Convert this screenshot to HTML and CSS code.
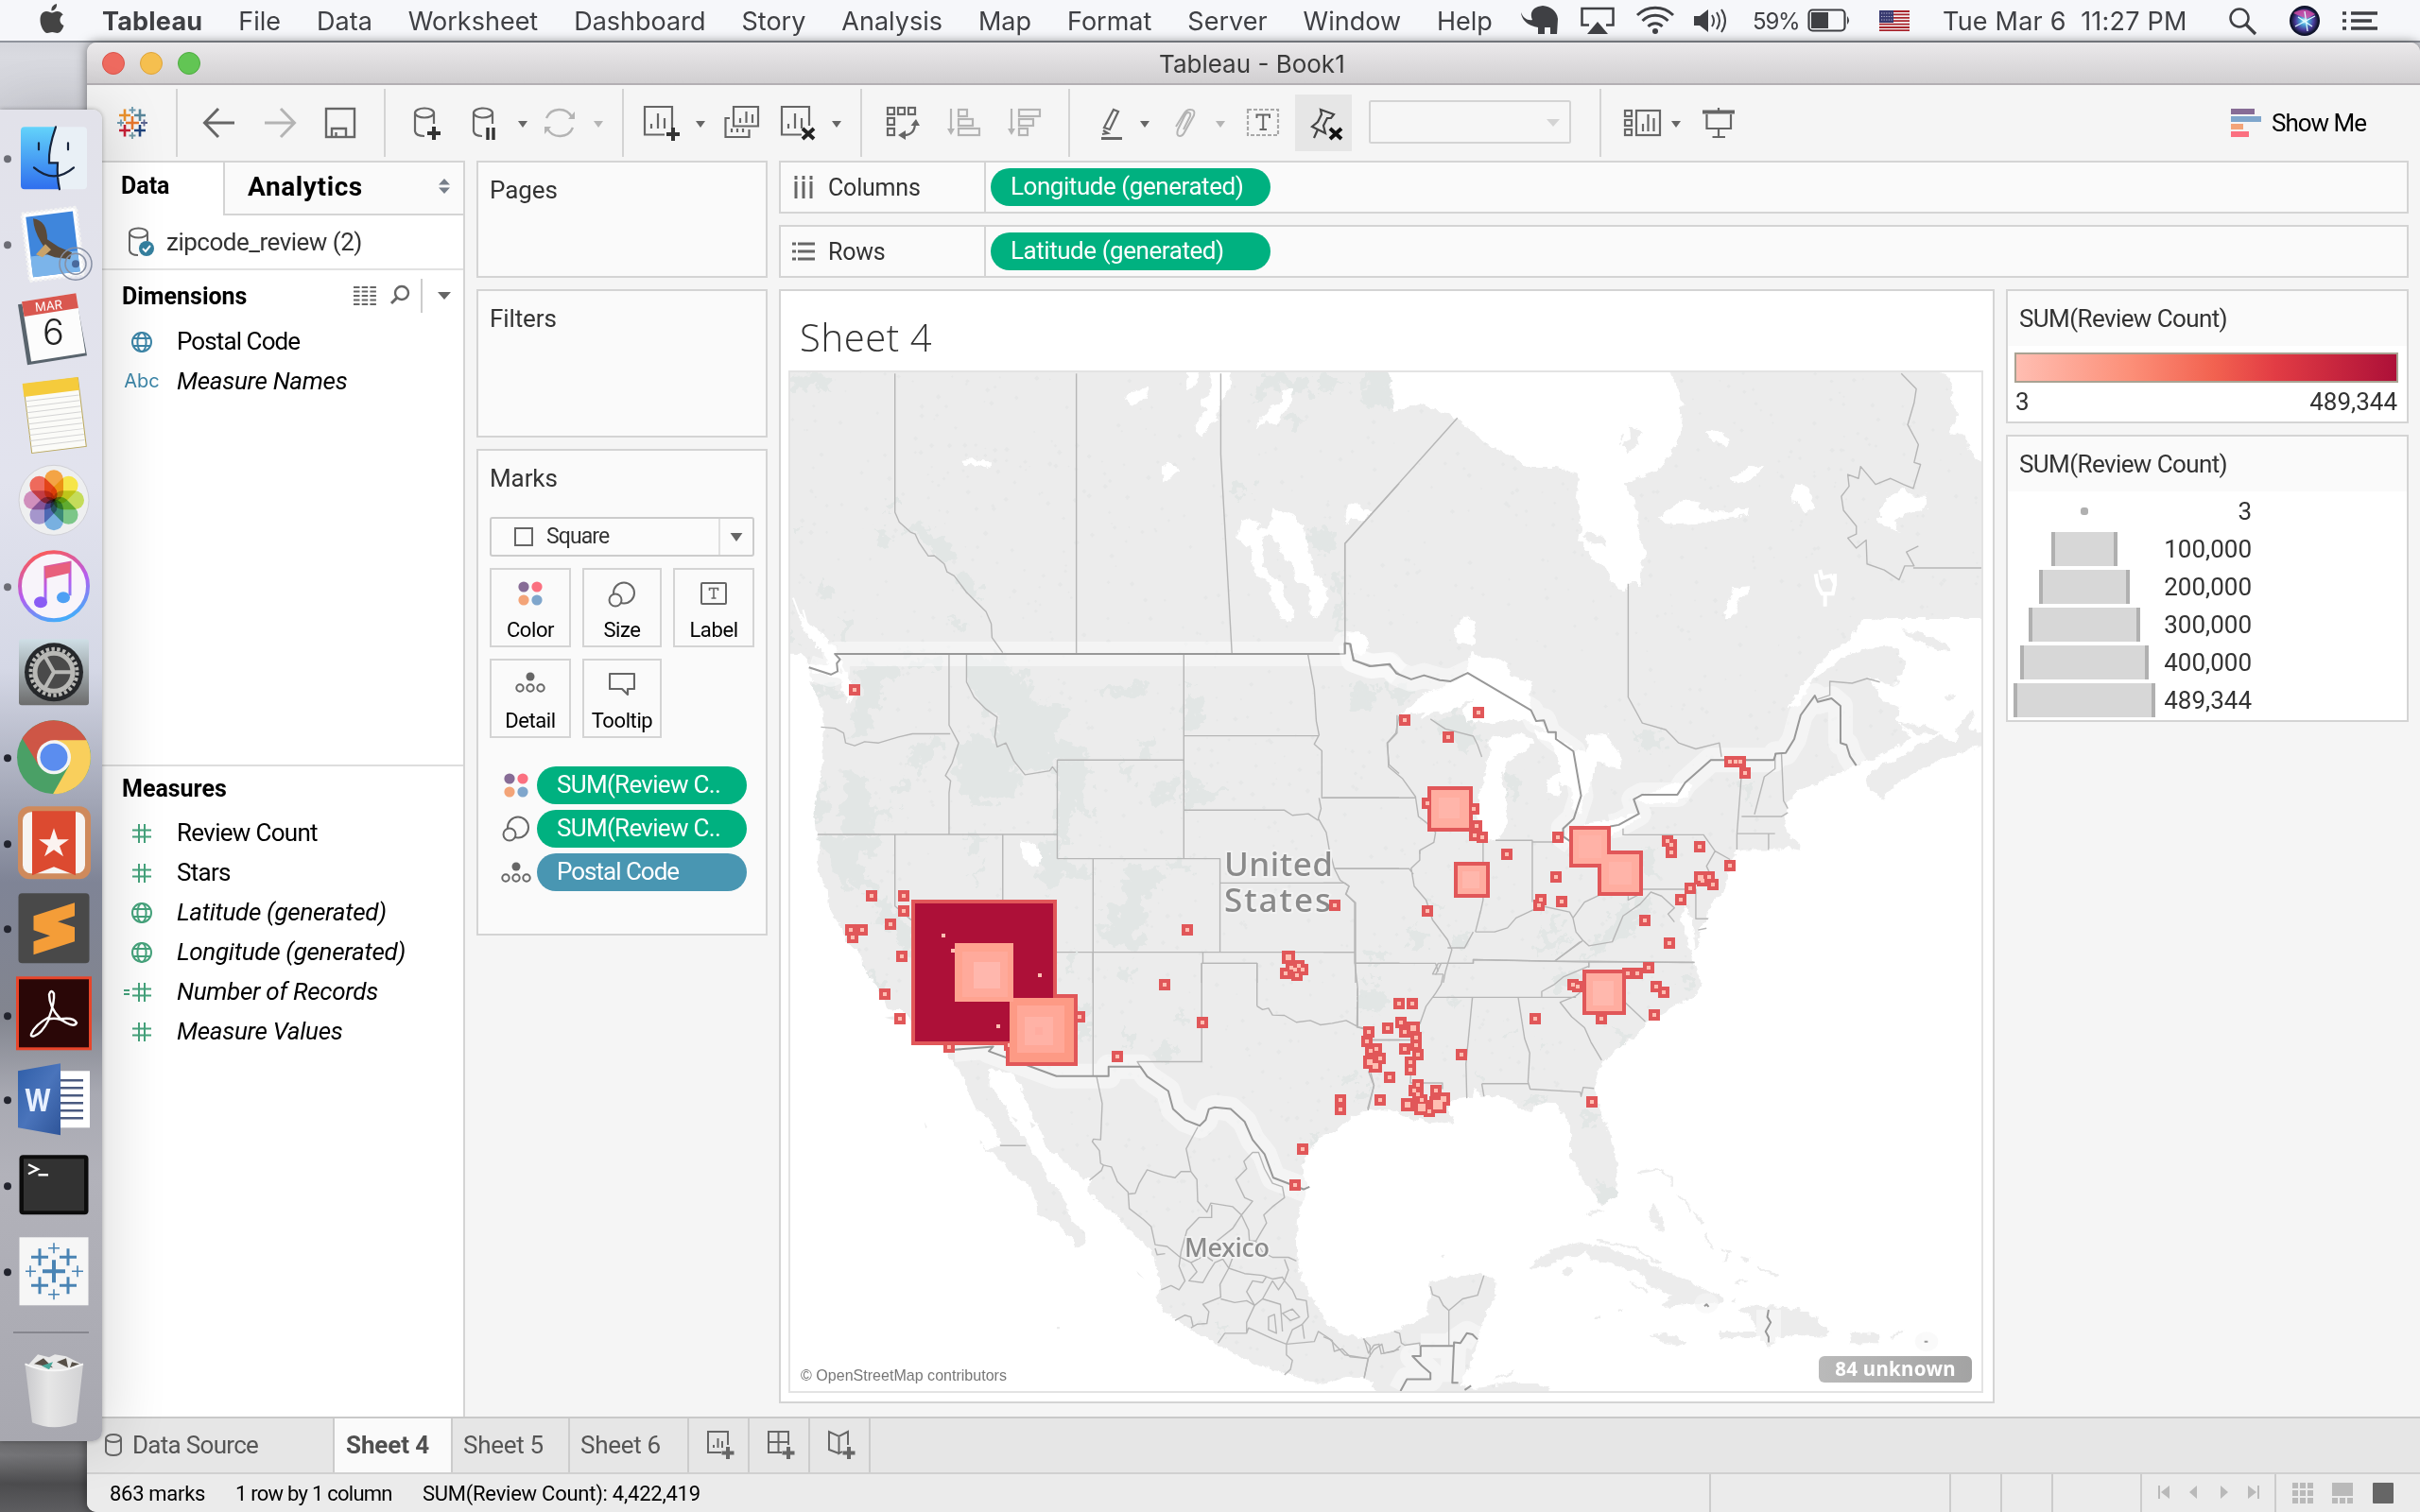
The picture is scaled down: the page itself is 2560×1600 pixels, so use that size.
FILE: index.html
```html
<!DOCTYPE html>
<html lang="en">
<head>
<meta charset="utf-8">
<title>Tableau - Book1</title>
<link rel="stylesheet" href="styles.css">
</head>
<body>
<svg class="defs" width="0" height="0" aria-hidden="true">
  <defs>
    <symbol id="caret" viewBox="0 0 10 7"><path d="M0 0H10L5 7Z"/></symbol>
    <symbol id="globe" viewBox="0 0 24 24"><g fill="none" stroke="currentColor" stroke-width="2"><circle cx="12" cy="12" r="10"/><ellipse cx="12" cy="12" rx="4.6" ry="10"/><path d="M3 8H21M3 16H21"/></g></symbol>
    <symbol id="hash" viewBox="0 0 22 22"><path d="M8 1V21M14 1V21M1 7.500H21M1 14.500H21" fill="none" stroke="currentColor" stroke-width="2"/></symbol>
    <symbol id="dots4" viewBox="0 0 26 26"><circle cx="6" cy="6" r="5.600" fill="#876c96"/><circle cx="20" cy="6" r="5.600" fill="#fb7080"/><circle cx="6" cy="20" r="5.600" fill="#f3a478"/><circle cx="20" cy="20" r="5.600" fill="#7fa6cc"/></symbol>
    <symbol id="sizes" viewBox="0 0 30 28"><g fill="#fafafa" stroke="#666" stroke-width="2"><circle cx="17" cy="12.500" r="11"/><circle cx="8" cy="20" r="6.500"/></g></symbol>
    <symbol id="detail" viewBox="0 0 32 22"><circle cx="16" cy="5" r="4.500" fill="#666"/><g fill="none" stroke="#666" stroke-width="2"><circle cx="5" cy="17" r="3.700"/><circle cx="16" cy="17" r="3.700"/><circle cx="27" cy="17" r="3.700"/></g></symbol>
    <linearGradient id="finder" x1="0" y1="0" x2="0" y2="1"><stop offset="0" stop-color="#63d3fa"/><stop offset="1" stop-color="#2f6fee"/></linearGradient>
    <linearGradient id="itunes" gradientUnits="userSpaceOnUse" x1="45" y1="-36" x2="70" y2="36"><stop offset="0" stop-color="#fa5a5a"/><stop offset=".5" stop-color="#b65cf0"/><stop offset="1" stop-color="#3fb0fa"/></linearGradient>
    <linearGradient id="prefs" x1="0" y1="0" x2="0" y2="1"><stop offset="0" stop-color="#cfdfe6"/><stop offset="1" stop-color="#6c6c6c"/></linearGradient>
    <radialGradient id="siri"><stop offset="0" stop-color="#e8ffff"/><stop offset=".3" stop-color="#48a8d8"/><stop offset=".7" stop-color="#4a3a9a"/><stop offset="1" stop-color="#161a38"/></radialGradient>
    <linearGradient id="word" x1="0" y1="0" x2="1" y2="1"><stop offset="0" stop-color="#2f5ea8"/><stop offset=".5" stop-color="#4a74bb"/><stop offset="1" stop-color="#2f5599"/></linearGradient>
    <linearGradient id="bin" x1="0" y1="0" x2="1" y2="0"><stop offset="0" stop-color="#c9c9cc"/><stop offset=".4" stop-color="#e6e6e6"/><stop offset="1" stop-color="#d2d2d4"/></linearGradient>
    <filter id="shore" color-interpolation-filters="sRGB"><feTurbulence type="fractalNoise" baseFrequency=".05" numOctaves="3" seed="4"/><feDisplacementMap in="SourceGraphic" scale="20" xChannelSelector="R" yChannelSelector="G"/></filter>
    <filter id="ragged" color-interpolation-filters="sRGB"><feTurbulence type="fractalNoise" baseFrequency=".035" numOctaves="3" seed="9"/><feDisplacementMap in="SourceGraphic" scale="70" xChannelSelector="R" yChannelSelector="G"/></filter>
  </defs>
</svg>

<header class="menubar">
  <svg class="apple" viewBox="0 0 28 34"><path d="M19 1C15 2 13 5 13.500 8.500C17 8 19.500 5 19 1ZM14 10.500C12 10.500 11 9 8 9C4 9 1.500 12.500 1.500 18C1.500 24.500 5.500 32 9 32C11 32 12 31 14.200 31C16.500 31 17.500 32 19.500 32C23 32 25.500 27.500 26.500 24C21 21.500 21.500 15 25.700 12.500C24 10 21.500 9 19.500 9C17 9 15.800 10.500 14 10.500Z" fill="#444"/></svg>
  <nav class="menus">
    <b>Tableau</b><span>File</span><span>Data</span><span>Worksheet</span><span>Dashboard</span><span>Story</span><span>Analysis</span><span>Map</span><span>Format</span><span>Server</span><span>Window</span><span>Help</span>
  </nav>
  <svg class="tray" width="240" height="44" viewBox="1600 0 240 44">
    <path d="M1609 13C1611 19 1616 22 1621 21C1618 14 1621 9 1627 7L1632 6C1640 7 1647 11 1648 20L1647 36H1640V29H1634V36H1627V29C1622 28 1610 25 1609 13Z" fill="#3f4044"/>
    <path d="M1681 26.500H1673.500V9H1706.500V26.500H1699" fill="none" stroke="#3f4044" stroke-width="2.500"/><path d="M1690 23L1701 36H1679Z" fill="#3f4044"/>
    <g fill="none" stroke="#3f4044" stroke-width="3"><path d="M1732 16A27 27 0 0 1 1770 16M1737.500 22A19 19 0 0 1 1764.500 22M1743.500 28A10.500 10.500 0 0 1 1758.500 28"/></g><circle cx="1751" cy="33" r="3" fill="#3f4044"/>
    <path d="M1792 17H1798L1807 10V34L1798 27H1792Z" fill="#3f4044"/><g fill="none" stroke="#3f4044" stroke-width="2"><path d="M1811 16Q1815 22 1811 28M1816 13Q1822 22 1816 31M1821 10Q1829 22 1821 34"/></g>
  </svg>
  <span class="pct">59%</span>
  <svg class="battery" width="46" height="26" viewBox="0 0 46 26"><rect x="1.500" y="1.500" width="38" height="22" rx="4" fill="none" stroke="#3f4044" stroke-width="2.200"/><rect x="4" y="4" width="18" height="17" fill="#3f4044"/><path d="M42 8Q46 12.500 42 17Z" fill="#3f4044"/></svg>
  <svg class="flag" width="32" height="22" viewBox="0 0 32 22"><path d="M0 0H32V22H0Z" fill="#f4f1f1"/><path d="M0 1H32M0 4.400H32M0 7.800H32M0 11.200H32M0 14.600H32M0 18H32M0 21.200H32" stroke="#a8242c" stroke-width="1.800"/><path d="M0 0H15V13H0Z" fill="#383a70"/><path d="M2 3H14M2 6.500H14M2 10H14" stroke="#b9bbd4" stroke-width="1.200" stroke-dasharray="1.200 1.400"/></svg>
  <span class="clock">Tue Mar 6&nbsp; 11:27 PM</span>
  <svg class="tray2" width="170" height="44" viewBox="2350 0 170 44">
    <circle cx="2369" cy="19" r="9.500" fill="none" stroke="#3f4044" stroke-width="2.500"/><path d="M2376 26L2386 36" stroke="#3f4044" stroke-width="3.200"/>
    <circle cx="2438" cy="22" r="16" fill="#10142c"/><circle cx="2438" cy="22" r="14" fill="url(#siri)"/><path d="M2426 14Q2438 6 2449 15L2440 20Z" fill="#d94fa8" opacity=".8"/><path d="M2428 28L2449 17M2438 12L2441 33M2431 18L2446 28" stroke="#dffcff" stroke-width="1.300"/>
    <path d="M2487 14H2515M2487 22H2509M2487 30H2515" stroke="#3f4044" stroke-width="3.400"/><path d="M2478 14H2482M2478 22H2482M2478 30H2482" stroke="#3f4044" stroke-width="3.400"/>
  </svg>
</header>

<main class="window">
  <div class="titlebar"><i class="light close"></i><i class="light min"></i><i class="light max"></i><span class="title">Tableau - Book1</span></div>

  <div class="toolbar">
    <svg class="tg" width="96" height="72" viewBox="92 94 96 72"><g fill="none" stroke-width="2.600"><path d="M140 123V137M133 130H147" stroke="#e8762c"/><path d="M132 115.500V128M126 122H138" stroke="#eb912c"/><path d="M148 115.500V128M142 122H154" stroke="#59879b"/><path d="M132 132V144.500M126 138H138" stroke="#c72035"/><path d="M148 132V144.500M142 138H154" stroke="#1f447e"/></g><g fill="none" stroke-width="1.800"><path d="M140 113V120M136.500 116.500H143.500M128 126.500V133.500M124 130H131" stroke="#6f9bb0"/><path d="M152.500 126.500V133.500M149 130H156" stroke="#5c6692"/><path d="M140 140V147M136.500 143.500H143.500" stroke="#7199a6"/></g></svg>
    <svg class="tg" width="220" height="72" viewBox="188 94 220 72"><path d="M248 130H217M231 115L216.500 130L231 145" fill="none" stroke="#666" stroke-width="3"/><path d="M280 130H311M297 115L311.500 130L297 145" fill="none" stroke="#b4b4b4" stroke-width="3"/><g fill="none" stroke="#666" stroke-width="2.400"><rect x="345" y="115" width="30" height="30"/><path d="M351 145V136H366V145M355.500 145V140"/></g></svg>
    <svg class="tg" width="252" height="72" viewBox="408 94 252 72"><g fill="none" stroke="#666" stroke-width="2.200"><ellipse cx="449" cy="119.500" rx="10" ry="5"/><path d="M439 119.500V139Q440 144 449 144M459 119.500V131"/><ellipse cx="511" cy="119.500" rx="10" ry="5"/><path d="M501 119.500V139Q502 144 510 144M521 119.500V131"/></g><path d="M459 134V148M452 141H466" stroke="#333" stroke-width="4"/><path d="M516 135V148M522 135V148" stroke="#333" stroke-width="3.400"/><path d="M548 128H558L553 135Z" fill="#666"/><g fill="none" stroke="#b4b4b4" stroke-width="2.400"><path d="M578 125A15 15 0 0 1 605 124M606 135A15 15 0 0 1 579 136"/></g><path d="M601 126H608V118ZM576 134V142L583 134Z" fill="#b4b4b4"/><path d="M628 128H638L633 135Z" fill="#b4b4b4"/></svg>
    <svg class="tg" width="252" height="72" viewBox="660 94 252 72"><g fill="none" stroke="#666" stroke-width="2.200"><path d="M711 137V113H682V142.500H703M689 136V131M696 136V120M703 136V125"/><path d="M776 113H802V133.500H776ZM783 130V125M789.500 130V118M796 130V121M772 125H767.500V145H792.500V137M774 140V136M780 140V136M786 140V136"/><path d="M856 133V113H827V142.500H848M834 136V131M841 136V120M848 136V125"/></g><path d="M712 135V149M705 142H719" stroke="#333" stroke-width="4"/><path d="M849 136L861 147M861 136L849 147" stroke="#222" stroke-width="4"/><path d="M736 128H746L741 135ZM880 128H890L885 135Z" fill="#666"/></svg>
    <svg class="tg" width="220" height="72" viewBox="912 94 220 72"><g fill="none" stroke="#666" stroke-width="2.200"><rect x="939" y="114" width="7" height="7"/><rect x="950" y="114" width="7" height="7"/><rect x="961" y="114" width="7" height="7"/><rect x="939" y="125" width="7" height="7"/><rect x="939" y="136" width="7" height="7"/><path d="M968 130Q968 143 956 143"/></g><path d="M963.500 133L969 126L973 133ZM958 138L950 143L958 148Z" fill="#666"/><g fill="none" stroke="#b4b4b4" stroke-width="2.200"><rect x="1014" y="116" width="9" height="7"/><rect x="1014" y="126" width="15" height="7"/><rect x="1014" y="136" width="22" height="7"/><path d="M1006 115V140M1070 115V140"/><rect x="1078" y="116" width="22" height="7"/><rect x="1078" y="126" width="15" height="7"/><rect x="1078" y="136" width="9" height="7"/></g><path d="M1002 136H1010L1006 143ZM1066 136H1074L1070 143Z" fill="#b4b4b4"/></svg>
    <svg class="tg" width="562" height="72" viewBox="1132 94 562 72"><g fill="none" stroke="#666" stroke-width="2.200"><path d="M1178 116L1183 118L1174 137L1168 135ZM1167 138L1172 141L1166 142"/></g><path d="M1165 146.500H1187" stroke="#666" stroke-width="3"/><path d="M1206 128H1216L1211 135Z" fill="#666"/><path d="M1252 137L1259 123Q1260 119 1257 119Q1255 119 1253 123L1246 137Q1244 144 1248 144Q1251 144 1253 140L1263 122Q1265 116 1259 116Q1255 116 1252 121L1244 134" fill="none" stroke="#b4b4b4" stroke-width="2"/><path d="M1286 128H1296L1291 135Z" fill="#b4b4b4"/><rect x="1320" y="116" width="32" height="27" fill="none" stroke="#a8a8a8" stroke-width="2.200" stroke-dasharray="4 2"/><path d="M1329.500 125V121.500H1343V125M1336.200 121.500V137M1332.500 137H1340" fill="none" stroke="#666" stroke-width="2"/><path d="M1370 100H1430V160H1370Z" fill="#e6e6e6"/><path d="M1397 116L1411 121L1408 125L1404 125L1400 133L1402 141L1388 134L1394 129L1398 121ZM1394 137L1390 146" fill="none" stroke="#444" stroke-width="2.200"/><path d="M1407 136L1419 147M1419 136L1407 147" stroke="#111" stroke-width="4"/><rect x="1449" y="107" width="212" height="44" rx="1.500" fill="#f6f6f6" stroke="#d4d4d4" stroke-width="2"/><path d="M1636 126H1650L1643 134Z" fill="#d4d4d4"/></svg>
    <svg class="tg last" width="160" height="72" viewBox="1694 94 160 72"><g fill="none" stroke="#666" stroke-width="2.200"><rect x="1719" y="117" width="7" height="6"/><rect x="1719" y="127" width="7" height="6"/><rect x="1719" y="137" width="7" height="6"/><rect x="1731" y="117" width="25" height="26"/><path d="M1738 139V131M1743.500 139V121M1749.500 139V125M1805.500 121V136H1831V121M1818 136V145M1811.500 145H1825M1818 114V118"/></g><path d="M1801 118.500H1835" stroke="#666" stroke-width="4"/><path d="M1768 128H1778L1773 135Z" fill="#666"/></svg>
    <div class="showme"><svg width="32" height="30" viewBox="0 0 32 30"><path d="M0 0H25V6H0Z" fill="#876c96"/><path d="M0 8H32V14H0Z" fill="#7fa6cc"/><path d="M0 16H13V22H0Z" fill="#f3a478"/><path d="M0 24H19V30H0Z" fill="#fb7080"/></svg>Show Me</div>
  </div>

  <div class="workspace">
    <aside class="data">
      <div class="ptabs"><div class="ptab on">Data</div><div class="ptab">Analytics<svg width="12" height="16" viewBox="0 0 12 16"><path d="M0 6.500L6 0L12 6.500ZM0 9.500H12L6 16Z" fill="#777f8a"/></svg></div></div>
      <div class="source"><svg width="30" height="32" viewBox="0 0 30 32"><g fill="none" stroke="#666" stroke-width="2"><ellipse cx="11.500" cy="6.500" rx="9.500" ry="5"/><path d="M2 6.500V25Q3 30 11 30M21 6.500V15"/></g><circle cx="20" cy="23" r="8" fill="#35809f"/><path d="M16 23L19 26L24 20" fill="none" stroke="#fff" stroke-width="2"/></svg>zipcode_review (2)</div>
      <section class="dims">
        <div class="phead">Dimensions
          <svg width="120" height="36" viewBox="370 296 120 36"><path d="M374 305H398M374 309.500H398M374 314H398M374 318.500H398M374 323H398" stroke="#666" stroke-width="2" stroke-dasharray="6.500 2.200"/><circle cx="425" cy="311" r="7" fill="none" stroke="#666" stroke-width="2.400"/><path d="M420 316L414 322" stroke="#666" stroke-width="3"/><path d="M446 296V332" stroke="#ccc" stroke-width="2"/><path d="M463 310H477L470 318Z" fill="#666"/></svg>
        </div>
        <div class="field blue"><svg width="24" height="24"><use href="#globe"/></svg><span>Postal Code</span></div>
        <div class="field blue"><em class="abc">Abc</em><i>Measure Names</i></div>
      </section>
      <section class="meas">
        <div class="phead">Measures</div>
        <div class="field teal"><svg width="22" height="22"><use href="#hash"/></svg><span>Review Count</span></div>
        <div class="field teal"><svg width="22" height="22"><use href="#hash"/></svg><span>Stars</span></div>
        <div class="field teal"><svg width="24" height="24"><use href="#globe"/></svg><i>Latitude (generated)</i></div>
        <div class="field teal"><svg width="24" height="24"><use href="#globe"/></svg><i>Longitude (generated)</i></div>
        <div class="field teal calc"><svg width="30" height="22" viewBox="-8 0 30 22"><path d="M-8 9H-2M-8 13H-2" stroke="currentColor" stroke-width="2"/><path d="M8 1V21M14 1V21M1 7.500H21M1 14.500H21" fill="none" stroke="currentColor" stroke-width="2"/></svg><i>Number of Records</i></div>
        <div class="field teal"><svg width="22" height="22"><use href="#hash"/></svg><i>Measure Values</i></div>
      </section>
    </aside>

    <div class="cards">
      <div class="card pages">Pages</div>
      <div class="card filters">Filters</div>
      <div class="card marks">Marks
        <div class="select"><i class="sq"></i><span>Square</span><b><svg width="14" height="9" fill="#666"><use href="#caret"/></svg></b></div>
        <div class="btns">
          <div class="btn"><svg width="26" height="26"><use href="#dots4"/></svg>Color</div>
          <div class="btn"><svg width="30" height="28"><use href="#sizes"/></svg>Size</div>
          <div class="btn"><svg width="28" height="26" viewBox="0 0 28 26"><rect x="1" y="2" width="26" height="22" rx="1" fill="none" stroke="#666" stroke-width="2"/><path d="M9.500 10V7.500H18.500V10M14 7.500V18M11.500 18H16.500" fill="none" stroke="#666" stroke-width="1.600"/></svg>Label</div>
          <div class="btn"><svg width="32" height="22"><use href="#detail"/></svg>Detail</div>
          <div class="btn"><svg width="28" height="26" viewBox="0 0 28 26"><path d="M1 2H27V18H20V24L14 18H1Z" fill="none" stroke="#666" stroke-width="2.200" stroke-linejoin="round"/></svg>Tooltip</div>
        </div>
        <div class="enc"><svg width="26" height="26"><use href="#dots4"/></svg><span class="pill">SUM(Review C..</span></div>
        <div class="enc"><svg width="30" height="28"><use href="#sizes"/></svg><span class="pill">SUM(Review C..</span></div>
        <div class="enc"><svg width="32" height="22"><use href="#detail"/></svg><span class="pill dim">Postal Code</span></div>
      </div>
    </div>

    <div class="stage">
      <div class="shelf"><div class="sname"><svg width="24" height="24" viewBox="0 0 24 24"><path d="M4 0V4M12 0V4M20 0V4M4 6V24M12 6V24M20 6V24" stroke="#666" stroke-width="3"/></svg>Columns</div><span class="pill">Longitude (generated)</span></div>
      <div class="shelf"><div class="sname"><svg width="24" height="24" viewBox="0 0 24 24"><path d="M0 4H4M0 12H4M0 20H4M6 4H24M6 12H24M6 20H24" stroke="#666" stroke-width="3"/></svg>Rows</div><span class="pill">Latitude (generated)</span></div>
      <div class="lower">
        <div class="view">
          <h1>Sheet 4</h1>
          <div class="mapbox">
            <svg id="map" class="map" width="1260" height="1078" viewBox="836 394 1260 1078">
              <rect x="836" y="394" width="1260" height="1078" fill="#ececec"/>
              <g id="relief"></g>
              <!-- north-west -->
              <g transform="translate(820 380) scale(.42091)">
                <g filter="url(#ragged)"><path class="park" d="M39 36H130L148 75L100 78L90 70L60 72L39 55ZM272 375L285 350L300 355V385ZM325 418L380 415L410 440L445 478L440 510L400 490L365 460L345 435ZM450 535L485 540L518 580L510 610L480 590ZM240 425L290 450L285 480L262 455ZM105 560L135 570L140 605L115 605ZM165 655L185 655L190 700L170 710ZM440 650L478 655L460 680ZM39 430L65 422L50 445ZM39 680L62 710L39 712ZM1220 55L1255 38L1340 50L1345 85L1320 85L1270 65L1225 90L1195 110ZM1365 50L1400 40L1430 60L1400 80L1365 78ZM1485 38H1538L1558 100L1540 120L1485 110ZM1275 140L1335 150L1320 168L1285 160ZM1148 325L1170 305L1200 320L1195 333L1150 338ZM1335 430L1375 428L1403 438V475L1370 478L1340 468ZM1400 530L1425 535V690L1410 680L1408 640L1420 600L1395 560ZM212 770L300 775L305 800L275 810L268 850L240 890L235 950L195 960L200 880L215 840ZM335 745H408V770L375 778L335 778ZM95 820L180 830L150 855L110 845ZM480 745H570L600 790L635 800L640 870L680 860L740 880L735 910L700 930L720 960L785 985L780 1010L700 1005L690 1035L630 1045L590 1010L560 1000L550 940L555 900L500 850L485 810ZM450 990L480 960L520 940L560 975L590 1020L620 1070L600 1100L560 1110L500 1118L470 1080L455 1040ZM810 825L880 830L920 808L932 830L900 838L870 850L810 840ZM1035 820L1070 850L1065 920L1032 925ZM1455 820L1510 825L1505 860L1495 880L1455 878ZM175 1045L240 1040L230 1100L250 1130L300 1120L290 1150L240 1160L260 1190H165L160 1130L180 1100ZM300 1065L330 1060L335 1090L305 1095ZM340 975L400 950L430 960L420 985L380 1000L370 1030L330 1015L350 990ZM112 1060L135 1065L125 1100L130 1140L98 1160L95 1130ZM712 1010L790 1010L795 1060L770 1090L810 1160L780 1150L745 1120L738 1190L712 1240ZM950 1085L980 1075L985 1060L1015 1050L1012 1100L980 1122L952 1118ZM870 1015L900 1035L895 1065L880 1050ZM1030 1045L1060 1050L1070 1090L1110 1078L1135 1085L1100 1105L1060 1125L1030 1130ZM112 1200L270 1198L250 1240L210 1245L225 1290L260 1340L300 1380L340 1430L340 1500L300 1460L270 1420L240 1350L195 1310L180 1340L160 1330L150 1290L125 1240ZM480 1200L530 1205L495 1240ZM500 1310L515 1260L530 1270L515 1300ZM670 1210L705 1215L710 1260L795 1280L770 1300L720 1300L700 1340L670 1330ZM880 1260L970 1290L965 1340L925 1350L930 1390L910 1440L940 1480L870 1475L820 1460L815 1430L860 1420L820 1380L870 1370L880 1310ZM990 1262H1050V1280L1000 1282ZM915 970L945 955L948 1000L918 995Z"/></g>
                <g filter="url(#shore)"><path class="water" d="M10 742L65 742L84 765L86 805L105 850L118 880L122 925L120 960L117 1020L108 1080L95 1140L100 1180L110 1210L102 1290L128 1330L132 1380L165 1430L175 1470L215 1500L218 1530L240 1568H10ZM65 640L75 665L105 680L128 708L150 720V740L165 750L162 790L180 790L200 830L190 860L175 850L165 805L140 798L92 782L84 768L120 775L140 770L130 745L110 725L85 700L68 670ZM1255 380L1300 395L1325 420L1335 470L1355 540L1380 565L1388 600L1365 652L1345 640V580L1335 565L1310 560L1305 520L1280 500L1258 455L1240 440L1220 450L1230 480L1222 520L1240 540L1270 560L1280 600L1307 640L1295 658L1272 650L1250 600L1240 560L1210 545L1198 510L1200 470L1180 470L1160 450L1170 410L1195 403L1215 410V430L1245 420ZM880 100L905 78L938 72L932 98L895 117ZM475 257L500 252L540 260V274L520 268L480 265ZM968 270L990 262L1013 280L1000 290L980 306L968 290ZM1042 20H1068L1060 60L1035 75L1032 60ZM1095 20H1145L1140 75L1120 100L1110 150L1090 165L1070 200L1058 185L1062 150L1085 130L1070 105L1095 80ZM1275 80L1300 75L1298 110L1280 130L1262 165L1235 155L1213 178L1220 150L1245 120L1275 110ZM1435 370L1460 362L1470 380L1500 385L1480 405L1450 400L1435 415L1440 395ZM613 1212L640 1215L665 1235L668 1270L648 1275L625 1250ZM1440 690L1470 688L1490 710L1485 740L1455 735Z"/></g>
                <path class="coast" d="M45 600L60 640L85 670M70 630L80 665M160 760L180 800M195 820L180 865"/>
                <path class="halo" d="M85 775L140 793L157 785L155 765L163 755L150 741H1432V715L1443 716L1455 757L1500 772L1540 768L1568 792"/>
                <path class="line" d="M301 36V385L312 410L340 435L352 440L362 462L385 495L400 494L425 515L432 535L450 545L480 585L500 605L530 635L543 665L545 700L572 738M757 36V740M1120 36V240L1148 740M1568 313L1432 464V712M437 742V920L461 965L445 1015L428 1047L441 1060L437 1090V1195M481 742V812L500 850L530 880L558 900L552 950L558 975L580 965L600 1010L628 1045L690 1035L697 1025L708 1040M709 1008V1256M709 1008H1027M1027 742V1256M709 1256H1118V1491M1118 1317H1424M1027 947H1367M1339 742L1355 830L1360 910L1367 945L1355 968L1374 985V1103H1568M1367 1103L1372 1130L1365 1155L1385 1190L1392 1230L1405 1280L1420 1310L1442 1325L1435 1345L1457 1367V1519H1568M1405 1281H1568M1027 1134H1280L1300 1147L1340 1143L1365 1160M107 1195H709M301 1195V1375L342 1410M572 1195V1360M799 1256V1568M707 1491H1455M1075 1491V1519M1072 1568V1519H1211V1568M115 925L150 928L172 940L177 965L200 972L225 962L260 965L310 950L345 942H440M1568 897L1560 940L1538 965L1543 1020L1568 1042"/>
                <path class="border" d="M85 775L140 793L157 785L155 765L163 755L150 741H1432V715L1443 716L1455 757L1500 772L1540 768L1568 792"/>
              </g>
              <!-- north-east -->
              <g transform="translate(1400 380) scale(.45279 .42091)">
                <g filter="url(#ragged)"><path class="park" d="M102 36H150L168 100L155 118L102 115ZM0 40H32L30 75L0 80ZM0 430L22 435V475L0 478ZM70 825L110 822V878H68ZM145 820L205 835L190 858L150 850ZM260 905L330 890L360 940L330 1000L300 950ZM735 940L790 938L788 975L760 990L740 970ZM420 1035L460 1048L445 1100L425 1090ZM980 1070L1000 1075L995 1120L985 1130ZM530 1390L555 1400L540 1450L520 1490L490 1508L515 1450ZM100 1500L130 1485L160 1510H110ZM290 1455L340 1450L325 1485L300 1478ZM700 1370L770 1360L720 1440L650 1490L600 1510L640 1470ZM245 1360L280 1375L270 1395ZM740 1230L780 1240L770 1290L740 1270Z"/></g>
                <g filter="url(#shore)"><path class="water" d="M150 20H800L825 65L837 110L833 190L815 230L780 280L705 312L712 335L728 360L735 430L752 495L740 520V575L722 555L703 585L680 572L665 530L630 505L598 450L605 410L590 350L598 290L545 272L480 272L445 245L380 213L350 180L313 148L225 110L165 130L168 105ZM180 890L240 840L290 822L325 800L345 740L380 755L415 752L440 800L488 812L480 850L498 905L520 930L475 910L430 905L395 915L360 905L335 915L330 880L355 850L320 870L290 885L245 892L228 905L235 885L190 895ZM400 945L383 962L390 985L385 1010L375 1060L362 1100L360 1150L368 1195L378 1212L405 1210L425 1180L431 1140L425 1090L415 1050L430 1010L465 985L490 965L480 950L455 940L430 952ZM490 935L525 938L545 955L590 985L615 990L618 945L660 942L680 980L697 1010L690 1025L660 1020L635 1010V1040L610 1100L600 1140L585 1135L580 1075L552 1065L548 1098L525 1090V1055L552 1040L548 1000L535 965L500 950ZM560 1210L575 1185L620 1165L680 1160L735 1140L740 1150L690 1185L650 1215H580ZM725 1105L770 1085L840 1065L858 1072L850 1095L825 1115H755ZM1560 652H1340L1260 655L1238 690L1228 712L1185 735L1135 795L1110 840L1085 880L1110 865L1140 810L1185 770L1230 742L1275 725L1320 722L1345 735L1362 760L1355 790L1340 795L1345 820L1325 820L1290 805L1275 805L1310 860L1345 870L1340 905L1370 950L1365 960L1330 985L1300 1000L1240 1025L1180 1055L1150 1070L1110 1085L1085 1110V1145L1077 1165L1090 1205L1115 1205V1240L1085 1230L1060 1242L1000 1255L960 1270L948 1290L945 1330L920 1360L900 1385L895 1430L875 1450L885 1480L865 1500L870 1535L885 1568H1560ZM1435 20L1460 45L1475 80L1465 95L1485 140L1465 180L1500 195L1510 230L1560 280V20ZM890 185L920 183L950 205L945 222L905 200ZM955 300L1000 270H1030L1000 302L960 310ZM785 400L840 355L880 362L870 375L930 385L995 375L990 390L900 410L820 415ZM1090 350L1105 315L1130 320L1145 370L1130 388ZM1300 380L1325 345L1355 325L1375 345L1408 345V375L1360 390L1330 405L1345 435L1300 410ZM960 575L998 572L975 600L955 650H935L950 605ZM305 680L330 648L352 665L350 715L320 712ZM60 690L90 690L106 720L90 745L65 735ZM850 1385L862 1420L868 1480L860 1495L845 1440L835 1400ZM55 370L78 362L90 382L113 385L95 405L65 402L52 415Z"/></g>
                <path class="lake" d="M1150 540L1155 570L1165 590L1190 590L1195 565L1185 545L1165 550L1160 530M1172 590V622M1195 540V570"/>
                <g filter="url(#shore)"><path class="land" d="M605 445L625 433L660 455L662 472L620 460ZM1347 678L1400 688L1450 715L1467 733L1440 732L1380 705ZM1270 1055L1285 1030L1350 1000L1400 965L1440 948L1480 965L1480 930L1515 880L1520 905L1505 935L1560 940V965L1480 990L1400 1030L1330 1075L1305 1105L1275 1085ZM1345 915L1400 920L1440 935L1430 945L1380 940ZM965 1275L1000 1250L1060 1240L1045 1255ZM690 190L700 185L695 215ZM715 165L748 185L730 195L735 215L712 232L700 215L718 200ZM1455 845L1475 840L1460 860Z"/></g>
                <path class="halo" d="M50 714L63 716L70 757L108 772L155 767L170 790L205 805L235 795L272 807L297 810L337 789L485 883L497 910L515 908L525 938L543 955L584 986L602 1098L585 1155L560 1180V1200L580 1215M670 1175L690 1171L737 1143L725 1107L745 1095H827L845 1065L905 1008H1052L1057 992L1080 990L1100 955L1115 895L1148 846L1155 862L1187 853L1208 872V965L1222 970L1230 998L1245 1022"/>
                <path class="line" d="M313 148L50 464V714M712 565V850L745 915L800 932L830 965L870 980L925 965L930 1000M1350 36L1385 75L1380 110L1365 165L1390 215L1380 260L1395 265L1378 325L1355 315L1325 300L1290 315L1255 270L1250 300L1225 290L1228 320L1210 345L1215 380L1245 420V440L1225 450L1245 475L1268 455L1270 515L1310 530L1345 555L1358 520H1380L1362 485L1390 470M1378 525H1537M1155 855L1183 845V810L1235 815L1270 803L1300 812M0 1103H217M172 895V940L150 965L152 1025L185 1055L215 1100L222 1150L240 1165L262 1190L258 1215L225 1235V1260L205 1280L212 1325L240 1360L255 1410L290 1460L300 1485L285 1540L280 1568M250 905L285 930L350 948L360 970L370 1000M373 1212V1360L368 1385L355 1440M402 1210H488V1365M488 1214H545M355 1440H400L430 1430L450 1405L490 1385L510 1375L575 1390L583 1405L610 1365L650 1345M583 1405L590 1440L605 1460L620 1475L675 1465L700 1400L740 1370L765 1340L790 1350L820 1380L805 1395L820 1415M712 1350V1360L740 1345M745 1333H870V1407H900M700 1180V1196H888L915 1237L950 1258M915 1237L895 1275L910 1310M966 1260V1195L977 1040M967 1193H1055M1040 1193V1240M977 1150H1070L1085 1140M1007 1145L1030 1050L1055 1030V990M1070 990L1075 1110L1085 1130M262 1548L275 1519H350V1510L540 1514L600 1465M540 1514L620 1516H867M75 1519H262L268 1540M25 1281H200L210 1295M0 1317H50L60 1325L52 1345L75 1367V1568M0 1491H75M290 1480H330L350 1440M620 1516V1530"/>
                <path class="border" d="M50 741V714L63 716L70 757L108 772L155 767L170 790L205 805L235 795L272 807L297 810L337 789L485 883L497 910L515 908L525 938H543V955L584 986L602 1098L585 1155L560 1180V1200L580 1215M670 1175L690 1171L737 1143L725 1107L745 1095H827L845 1065L905 1008H1052L1057 992L1080 990L1100 955L1115 895L1148 846L1155 862L1187 853L1208 872V965L1222 970L1230 998L1245 1022"/>
              </g>
              <!-- south-west -->
              <g transform="translate(820 900) scale(.42091 .38266)">
                <g filter="url(#ragged)"><path class="park" d="M1005 450L1030 455L1025 480L1008 470ZM1420 620L1450 610L1460 640L1430 645ZM1460 660L1490 660L1480 690L1455 685ZM1475 390L1515 395L1510 440L1470 445ZM860 330L900 320L880 360ZM940 560L990 530L1005 560L980 580ZM1105 1310L1140 1320L1120 1345ZM730 290L760 280L750 340ZM1345 800L1375 785L1355 815ZM870 480L900 520L890 550ZM215 320L260 360L285 410L250 380ZM740 440L790 430L790 520L765 520Z"/></g>
                <g filter="url(#shore)"><path class="water" d="M105 0L102 60L128 110L135 170L165 210L175 250L215 290L220 330L250 370L275 420L280 440L320 445L345 480L380 500L415 530L430 560L455 600L480 650L500 710L540 745L560 790L565 815L535 825L515 805L530 830L570 855L590 890L640 930L660 985L655 1010L700 1025L740 1070L760 1100L782 1080L780 1055L745 1020L725 950L690 910L660 850L630 800L600 760L575 700L540 650L538 605L560 610L600 620L615 650L640 720L655 750L680 820L745 880L790 915L785 945L850 1005L880 1040L945 1105L955 1150L972 1200L955 1235L975 1275L1050 1330L1110 1365L1200 1420L1290 1450L1370 1480L1430 1460L1490 1465L1525 1520H10V0ZM1570 725L1530 718L1490 720L1450 745L1430 770L1380 790L1345 830L1325 870L1335 920L1330 965L1315 1010L1312 1120L1325 1190L1350 1240L1380 1290L1400 1315L1450 1335L1465 1350L1510 1335L1570 1325Z"/></g>
                <path class="land" d="M275 462L300 458L300 470ZM375 750L382 765L378 768ZM593 735L610 745L605 752ZM640 750L655 760L645 768ZM515 800L522 808L515 812ZM708 1317H715V1323H708ZM908 1162L928 1185L912 1172Z"/>
                <path class="halo" d="M450 551L548 542L537 555L707 624H838V598H918L935 625L988 665L1000 715L1030 745L1067 761L1082 745L1090 715L1105 710L1145 715L1180 750L1200 800L1230 840L1252 905L1300 925L1328 937L1343 930"/>
                <path class="line" d="M1211 430V312H1072V584H910L918 598M799 281V622M1211 430L1225 440L1240 436L1250 455L1280 456L1310 475L1345 470L1370 482L1400 478L1435 470L1465 488M1457 145V312L1464 380L1462 488L1478 493L1500 524H1570M1457 312H1570M1497 615L1505 650L1490 720M565 816H630M808 626L822 700L818 800L800 798L797 805L815 830L818 865L825 870L820 885L790 912M825 870L845 875L860 915L887 945L890 990L925 1020L945 1040L955 1090L985 1095L1018 1125M887 950L905 948L915 920L935 883L975 898L1005 905L1020 888L1045 888L1060 910L1062 970L1085 1000L1095 975L1150 985L1172 1008L1150 1045L1110 1080M1062 765L1033 825L1045 888M1097 980V1015H1065L1035 1050L1020 1110L1015 1150L1030 1190L1015 1215L995 1203L970 1215M1172 1008L1190 1050L1192 1080H1208L1235 1030L1228 1008L1250 985L1280 960L1275 930L1250 920L1230 880L1215 835L1200 835L1178 860L1185 880L1158 910L1180 960L1200 970L1172 1008M1208 1080L1225 1110L1250 1125L1290 1125L1310 1135M955 1100L960 1118L980 1115M1018 1125L1045 1140L1060 1165L1040 1190L1075 1195L1090 1165L1105 1140L1125 1130L1140 1155L1180 1170L1225 1175L1250 1185L1275 1180L1280 1190L1300 1215L1310 1240L1335 1245L1340 1290L1325 1310L1330 1350M1140 1155L1118 1200L1120 1235L1075 1255L1090 1275L1085 1308L1060 1310L1045 1320M1005 1300L1030 1285L1045 1290L1050 1315M1120 1240L1155 1250L1185 1245L1205 1258L1185 1305V1335L1130 1335L1113 1362M1185 1335L1190 1320L1250 1350L1285 1365L1285 1395L1300 1410L1295 1435L1280 1450M1205 1258L1185 1220L1200 1190L1225 1195L1235 1178M1205 1258L1225 1240L1250 1190M1250 1190L1265 1215L1280 1190M1225 1240L1270 1255L1275 1330M1240 1290L1255 1283L1260 1335L1240 1325ZM1275 1280L1300 1268L1318 1290L1295 1300ZM1285 1365L1355 1358L1365 1330L1400 1355L1405 1385L1425 1378L1445 1400L1490 1405L1480 1460M1490 1405L1505 1380L1525 1365L1530 1390L1568 1380M1280 1190L1290 1160L1280 1130M1045 1140L1080 1120L1100 1135M1140 1155L1150 1125M1478 1350L1495 1370V1400M1325 1310L1300 1325L1285 1365"/>
                <path class="border" d="M450 551L548 542L537 555L707 624H838V598H918L935 625L988 665L1000 715L1030 745L1067 761L1082 745L1090 715L1105 710L1145 715L1180 750L1200 800L1230 840L1252 905L1300 925L1328 937L1343 930"/>
              </g>
              <!-- south-east -->
              <g transform="translate(1400 900) scale(.45279 .38266)">
                <g filter="url(#ragged)"><path class="park" d="M85 400L110 385L150 400L145 440L85 445ZM90 345L130 350L120 370ZM200 215L235 225L240 260L200 270ZM540 350L600 330L590 370L540 400ZM610 730L635 735V760H610ZM475 680L520 685L500 710ZM640 930L690 930L685 965L660 985L640 970ZM410 495L435 500L420 525ZM290 410L310 415L305 435ZM835 350L880 350L870 375L840 370ZM500 520L520 530L510 545ZM360 620L380 625L365 640ZM690 500L725 515L710 535ZM540 300L560 250L580 230Z"/></g>
                <g filter="url(#shore)"><path class="water" d="M1560 0H965L945 60L940 110L905 150L900 190L875 220L885 250L865 290L885 370L870 400L825 430L780 460L750 480L725 520L680 555L650 590L632 650L640 690L668 780L690 870L685 960L650 985L620 930L600 900L575 840V760L545 700L520 695L475 725L430 685L370 680L350 660L345 685L300 690L285 715L305 745L250 755L200 740L150 725L110 718L70 735L30 780L0 790V1290L20 1315L50 1340L100 1345L160 1328L240 1290L250 1195L290 1178L370 1170L405 1190L400 1240L385 1270L370 1310L365 1350L345 1420L320 1480L360 1485L440 1470H500L530 1490V1520H1560ZM0 1480L60 1455L100 1462L135 1520H0ZM845 150L860 200L865 265L855 260L850 210Z"/></g>
                <g filter="url(#shore)"><path class="land" d="M480 1155L505 1130L540 1100L600 1083L660 1095L720 1125L745 1130L790 1160L860 1195L935 1240V1250L870 1255L788 1262L815 1230L760 1205L740 1170L680 1145L620 1130V1112L560 1130L520 1150ZM558 1165L565 1150L582 1158L578 1175ZM762 1342L800 1335L850 1360L845 1368L800 1362ZM968 1268L1000 1258L1080 1262L1130 1275L1185 1330L1170 1345L1100 1340L1060 1350L1040 1378L1020 1345L930 1350L925 1330L1008 1330L1000 1290ZM1232 1335L1298 1338L1295 1362H1235ZM770 975L785 1005L797 1050L785 1050L760 1010ZM960 1195L990 1185L970 1205ZM605 1012L640 990L660 992L620 1008ZM280 738L305 735L300 755Z"/>
                <path class="cay" d="M735 890L780 882L812 905V930M830 955L855 985V1000M865 1000L885 1030M890 1060L908 1100M930 1105L950 1110L938 1135M975 1125L998 1132M1015 1155L1065 1178M720 1195L760 1225M640 1080L720 1095L790 1145M1325 1345L1355 1328M400 1460L445 1442M690 1272H702M633 1290H645M280 1118V1128M390 1235L402 1225M955 1250L965 1240"/></g>
                <path class="halo" d="M1040 1270V1360M227 1370H305V1360L335 1335L360 1352M305 1362L301 1470M227 1370V1398H208L250 1445V1462H195L180 1495"/>
                <g fill="#f6f6f6" opacity=".6"><circle cx="895" cy="1252" r="28"/><circle cx="1409" cy="1358" r="27"/></g>
                <path class="line" d="M80 380V488L110 495V524H205M225 0V10M280 342H255L268 312H350V302L540 306L605 250M540 306H620L867 310M280 342L275 370L262 395L240 430L225 480M255 406H590M348 406L333 590L335 685M455 406L470 520L482 560L478 640L483 660L600 668L602 680L607 655L632 658M370 645H478M370 645L375 680M590 402L553 420L580 460L610 490L625 530L650 580M600 392L590 402M700 415L752 473M510 405V390L540 370L560 350L620 320V307M205 600L203 643H278V660M105 610L118 650L103 715M250 1205L255 1228L270 1235L280 1258L293 1272V1368M293 1272L325 1240L360 1230L375 1175M0 1345L15 1352L50 1395L105 1405L95 1460M95 1350L105 1390L118 1368L130 1365L135 1392L165 1385L180 1370M165 1330L178 1335L182 1362L190 1368L225 1362V1370M875 220L895 215"/>
                <path class="border" d="M1040 1270L1037 1290L1045 1305L1033 1330L1040 1345V1360M227 1370H305V1360L320 1362L335 1335L348 1338L360 1352M305 1362L301 1472H315M227 1370V1398H208L230 1425L250 1445V1462H195L180 1495M330 1492L345 1480M890 1260L895 1255L900 1262M1404 1358H1412"/>
              </g>
              <g class="labels"><text x="1295" y="927" font-size="35" textLength="115">United</text><text x="1295" y="965" font-size="35" textLength="113">States</text><text x="1253" y="1330" font-size="27" textLength="90">Mexico</text></g>
              <g id="marks"></g>
              <text class="osm" x="847" y="1461" textLength="218" lengthAdjust="spacingAndGlyphs">© OpenStreetMap contributors</text>
            </svg>
            <div class="unknown">84 unknown</div>
          </div>
        </div>
        <div class="legends">
          <div class="legend color"><div class="lh">SUM(Review Count)</div><div class="ramp"></div><div class="ends"><span>3</span><span>489,344</span></div></div>
          <div class="legend size"><div class="lh">SUM(Review Count)</div>
            <div class="srow"><div><i class="dot"></i></div><span>3</span></div>
            <div class="srow"><div><i style="width:70px"></i></div><span>100,000</span></div>
            <div class="srow"><div><i style="width:96px"></i></div><span>200,000</span></div>
            <div class="srow"><div><i style="width:118px"></i></div><span>300,000</span></div>
            <div class="srow"><div><i style="width:136px"></i></div><span>400,000</span></div>
            <div class="srow"><div><i style="width:150px"></i></div><span>489,344</span></div>
          </div>
        </div>
      </div>
    </div>
  </div>

  <div class="sheets">
    <div class="st src"><svg width="18" height="24" viewBox="0 0 18 24"><g fill="none" stroke="#666" stroke-width="2"><ellipse cx="9" cy="5" rx="8" ry="4"/><path d="M1 5V19Q2 23 9 23Q16 23 17 19V5"/></g></svg>Data Source</div>
    <div class="st on">Sheet 4</div><div class="st s5">Sheet 5</div><div class="st s6">Sheet 6</div>
    <div class="st ic"><svg width="32" height="32" viewBox="0 0 32 32"><path d="M24 16V2H3V24H17M9 19V16M13.500 19V9M18 19V12" fill="none" stroke="#666" stroke-width="2"/><path d="M24 18V31M17.500 24.500H30.500" stroke="#666" stroke-width="4"/></svg></div>
    <div class="st ic"><svg width="32" height="32" viewBox="0 0 32 32"><path d="M24 16V2H3V24H17M13.500 2V24M3 13H24" fill="none" stroke="#666" stroke-width="2"/><path d="M24 18V31M17.500 24.500H30.500" stroke="#666" stroke-width="4"/></svg></div>
    <div class="st ic"><svg width="32" height="32" viewBox="0 0 32 32"><path d="M13.500 25L3 21V2L13.500 7L23 2V16M13.500 7V25L17 23" fill="none" stroke="#666" stroke-width="2"/><path d="M24 18V31M17.500 24.500H30.500" stroke="#666" stroke-width="4"/></svg></div>
  </div>
  <div class="status"><span class="s1">863 marks</span><span class="s2">1 row by 1 column</span><span class="s3">SUM(Review Count): 4,422,419</span>
    <svg width="760" height="40" viewBox="1800 1560 760 40"><path d="M1809 1560V1600M2063 1560V1600M2117 1560V1600M2171 1560V1600M2265 1560V1600M2407 1560V1600" stroke="#ccc" stroke-width="2"/><g fill="#b9b9b9"><path d="M2283 1572H2285V1586H2283ZM2295 1572V1586L2286 1579ZM2324 1572V1586L2316 1579ZM2349 1572L2357 1579L2349 1586ZM2378 1572L2387 1579L2378 1586ZM2388 1572H2390V1586H2388ZM2425 1569h6v6h-6zM2433 1569h6v6h-6zM2441 1569h6v6h-6zM2425 1577h6v6h-6zM2433 1577h6v6h-6zM2441 1577h6v6h-6zM2425 1585h6v6h-6zM2433 1585h6v6h-6zM2441 1585h6v6h-6zM2467 1569h22v14h-22zM2467 1585h6v6h-6zM2475 1585h6v6h-6zM2483 1585h6v6h-6z"/></g><rect x="2510" y="1569" width="22" height="22" rx="1" fill="#666"/></svg>
  </div>
</main>

<aside class="dock">
  <svg viewBox="0 -45 108 90"><circle class="run soft" cx="8" cy="1" r="4"/><rect x="22" y="-33" width="70" height="66" rx="4" fill="#e9f0f6"/><path d="M26 -33H59Q51 -10 52 5H61Q60 20 63 33H26Q22 33 22 29V-29Q22 -33 26 -33Z" fill="url(#finder)"/><path d="M59 -33Q51 -10 52 5H61Q60 20 63 33M41 -16V-9M72 -16V-9M36 10Q57 28 78 10" fill="none" stroke="#16243c" stroke-width="2.200" stroke-linecap="round"/></svg>
  <svg viewBox="0 -45 108 90"><circle class="run soft" cx="8" cy="1" r="4"/><g transform="rotate(-7 57 0)"><rect x="27" y="-36" width="58" height="72" fill="#fff" stroke="#f2f2f2" stroke-width="3" stroke-dasharray="3 2"/><rect x="31" y="-32" width="50" height="64" fill="#3f86dc"/><path d="M31 10H81V32H31Z" fill="#7bb4ea"/></g><path d="M35 -27Q50 -25 50 -5L62 3L76 9L74 16L58 14L50 11L40 12L46 2Q36 -12 35 -27Z" fill="#5a4a3a"/><path d="M48 0L54 6L45 14L38 11Z" fill="#c9a36a"/><g fill="none" stroke="#8790a4" stroke-width="1.500"><circle cx="80" cy="21" r="17"/><circle cx="80" cy="21" r="11"/></g><circle cx="80" cy="21" r="4" fill="#4a6a9c"/></svg>
  <svg viewBox="0 -45 108 90"><path d="M19 -26L80 -36L92 28L29 38Z" fill="#59646d"/><g transform="rotate(-9 57 0)"><rect x="28" y="-34" width="58" height="64" fill="#fcfcfc"/><rect x="28" y="-34" width="58" height="16" fill="#d9574f"/></g><text x="37" y="-20" transform="rotate(-6 50 -24)" font-size="13" fill="#fff">MAR</text><text x="45" y="17" font-size="38" font-weight="300" fill="#222">6</text></svg>
  <svg viewBox="0 -45 108 90"><g transform="rotate(-7 57 0)"><rect x="29" y="-36" width="58" height="73" fill="#fbfbf8" stroke="#b9a75c" stroke-width="1"/><rect x="28" y="-37" width="59" height="14" fill="#f5cb3c"/><path d="M29 -18H86M29 -12H86M29 -6H86M29 0H86M29 6H86M29 12H86M29 18H86M29 24H86M29 30H86" stroke="#d4d4d4" stroke-width="1"/></g></svg>
  <svg viewBox="0 -45 108 90"><circle cx="57" cy="0" r="37" fill="#eeeff0" stroke="#d0d0d6"/><g class="petals"><rect x="47" y="-32" width="20" height="33" rx="10" fill="#f4a445"/><rect x="47" y="-32" width="20" height="33" rx="10" fill="#f6e548" transform="rotate(45 57 0)"/><rect x="47" y="-32" width="20" height="33" rx="10" fill="#c5dc5a" transform="rotate(90 57 0)"/><rect x="47" y="-32" width="20" height="33" rx="10" fill="#7cc688" transform="rotate(135 57 0)"/><rect x="47" y="-32" width="20" height="33" rx="10" fill="#78b0e0" transform="rotate(180 57 0)"/><rect x="47" y="-32" width="20" height="33" rx="10" fill="#a596cc" transform="rotate(225 57 0)"/><rect x="47" y="-32" width="20" height="33" rx="10" fill="#d08fbc" transform="rotate(270 57 0)"/><rect x="47" y="-32" width="20" height="33" rx="10" fill="#ee6a5c" transform="rotate(315 57 0)"/></g></svg>
  <svg viewBox="0 -45 108 90"><circle class="run soft" cx="8" cy="1" r="4"/><circle cx="57" cy="0" r="36" fill="#f8f4fa" stroke="url(#itunes)" stroke-width="4"/><path d="M48 15V-20L74 -25V10" fill="none" stroke="url(#itunes)" stroke-width="3"/><path d="M48 -20L74 -25V-14L48 -8Z" fill="#e8607c"/><ellipse cx="43" cy="17" rx="7" ry="6" fill="#8a5cf4"/><ellipse cx="67" cy="12" rx="7" ry="6" fill="#4ea0f4"/></svg>
  <svg viewBox="0 -45 108 90"><rect x="20" y="-35" width="74" height="70" rx="3" fill="url(#prefs)"/><circle cx="57" cy="0" r="31" fill="#26282b"/><circle cx="57" cy="0" r="24.500" fill="none" stroke="#b9b9b6" stroke-width="4" stroke-dasharray="3.500 2.400"/><circle cx="57" cy="0" r="20" fill="#4a4a4a" stroke="#b9b9b6" stroke-width="5"/><path d="M57 0H76M57 0L48 -16M57 0L48 16" stroke="#b9b9b6" stroke-width="4"/></svg>
  <svg viewBox="0 -45 108 90"><circle class="run" cx="8" cy="1" r="4"/><circle cx="57" cy="0" r="39" fill="#4aa066"/><path d="M57 0L23.500 -20A39 39 0 0 1 91.500 -18Z" fill="#ce5646"/><path d="M57 -18H91.500A39 39 0 0 1 56 39L73 9Z" fill="#f9cf5c"/><path d="M23.500 -20L41 9L57 -10Z" fill="#ce5646"/><circle cx="57" cy="0" r="18" fill="#f4f4f4"/><circle cx="57" cy="0" r="14.500" fill="#5b8def"/></svg>
  <svg viewBox="0 -45 108 90"><circle class="run" cx="8" cy="1" r="4"/><rect x="19" y="-39" width="77" height="77" rx="12" fill="#cf8a5c"/><rect x="24" y="-33" width="66" height="65" rx="9" fill="#f6f4f2"/><path d="M34 -34H80V34L57 25L34 34Z" fill="#dc4a30"/><path d="M57 -16L61 -4H73L63 3L67 14L57 7L47 14L51 3L41 -4H53Z" fill="#fbf3f0"/></svg>
  <svg viewBox="0 -45 108 90"><circle class="run" cx="8" cy="1" r="4"/><rect x="19.500" y="-37" width="75" height="74" rx="4" fill="#494949"/><path d="M35.500 -13L79 -27V-13L61 -7L79 -1V14L35.500 28V14L53 8L35.500 2Z" fill="#f49d38"/></svg>
  <svg viewBox="0 -45 108 90"><circle class="run" cx="8" cy="2" r="4"/><rect x="17" y="-40" width="80" height="78" fill="#e8452a"/><rect x="20" y="-37" width="74" height="72" fill="#2a0707"/><path d="M33 21Q37 11 52 3Q58 -13 57 -22Q54 -27 52 -21Q52 -7 64 5Q78 3 81 9Q79 14 70 9Q62 3 52 5Q44 21 36 23Q32 24 33 21Z" fill="none" stroke="#fff" stroke-width="2.400"/></svg>
  <svg viewBox="0 -45 108 90"><circle class="run" cx="8" cy="0" r="4"/><rect x="60" y="-31" width="35" height="60" fill="#fff"/><path d="M64 -21H88M64 -13H88M64 -5H88M64 3H88M64 11H88M64 19H88" stroke="#4a5a80" stroke-width="2.600"/><path d="M19 -31L64 -39V37L19 29Z" fill="url(#word)"/><text x="26" y="12" font-size="32" font-weight="700" fill="#e8f0ff" textLength="28" lengthAdjust="spacingAndGlyphs">W</text></svg>
  <svg viewBox="0 -45 108 90"><circle class="run" cx="8" cy="1" r="4"/><rect x="20.500" y="-32" width="73" height="63" rx="4" fill="#0c0c0c"/><rect x="25" y="-28" width="64" height="55" fill="#323232"/><path d="M30 -22L40 -17L30 -12M40.500 -11H51" fill="none" stroke="#fff" stroke-width="2.400"/></svg>
  <svg viewBox="0 -45 108 90"><circle class="run" cx="8" cy="1" r="4"/><rect x="20.500" y="-36" width="73" height="72" fill="#f6f6f6"/><g fill="none" stroke="#4a84b4"><path d="M57 -12V12M45 0H69" stroke-width="4"/><path d="M42 -24V-6M33 -15H51M72 -24V-6M63 -15H81M42 6V24M33 15H51M72 6V24M63 15H81" stroke-width="3"/><path d="M57 -30V-19M51 -24.500H63M57 19V30M51 24.500H63M32 -6V6M27 0H38M82 -6V6M76 0H88" stroke-width="1.600"/></g></svg>
  <hr>
  <svg class="trash" viewBox="0 -45 108 90"><path d="M30 -27L40 -38L52 -35L58 -38L70 -36L86 -28L70 -20H40Z" fill="#e8e8e8"/><path d="M36 -28L46 -34L56 -24ZM60 -30L70 -34L72 -24ZM76 -30L84 -28L74 -24Z" fill="#575048"/><path d="M44 -26L56 -30L52 -22Z" fill="#49a89a"/><path d="M26.500 -28Q57 -14 88 -28L81 34Q57 44 34 34Z" fill="url(#bin)"/><path d="M26.500 -28Q57 -14 88 -28" fill="none" stroke="#f6f6f6" stroke-width="2"/></svg>
</aside>
<script src="marks.js"></script>
</body>
</html>
```

FILE: styles.css
```css
* { box-sizing: border-box; }
body {
  margin: 0; width: 2560px; height: 1600px; overflow: hidden; position: relative;
  font-family: Roboto, "Noto Sans", sans-serif; font-size: 26px; color: #333;
  background: linear-gradient(#c9cad0 0, #d9dae0 60px, #d0d1d8 116px, #5c5c5e 1500px, #77777a 1540px, #4c4c4e 1570px, #5d5d60 1600px);
}
.defs { position: absolute; }
svg { display: block; flex: none; }

.menubar {
  height: 45px; display: flex; align-items: center; background: #f6f7fa; border-bottom: 2px solid #90949c;
  font: 27px Inter, "Noto Sans", sans-serif; color: #3f4044; white-space: nowrap;
}
.menubar span, .menubar b { padding-top: 2px; }
.apple { width: 28px; height: 34px; margin: -4px 39px 0 41px; }
.menus { display: flex; gap: 38px; width: 1492px; }
.menus b { letter-spacing: .2px; }
.pct { width: 58px; margin-left: 14px; font-size: 24px; letter-spacing: -1.2px; }
.battery { margin-right: 30px; }
.flag { margin-right: 35px; }
.clock { width: 295px; letter-spacing: .2px; }

.window { margin-left: 92px; height: 1555px; display: flex; flex-direction: column; background: #f5f5f5; border-radius: 10px 10px 0 10px; overflow: hidden; box-shadow: 0 0 12px rgba(0,0,0,.5); }
.titlebar { height: 45px; flex: none; background: linear-gradient(#ebe9eb, #d1cfd1); border-bottom: 2px solid #b3afb3; display: flex; align-items: center; gap: 16px; padding-left: 16px; padding-top: 1px; }
.light { width: 24px; height: 24px; border-radius: 50%; border: 1.5px solid; }
.close { border-color: #d9534a; background: #ee6a5f; }
.min { background: #f5bf4f; border-color: #dda33a; }
.max { background: #62c554; border-color: #4dab3f; }
.title { margin-left: 998px; font: 26px Inter, sans-serif; letter-spacing: 0; color: #3a3a3a; }

.toolbar { height: 80px; flex: none; display: flex; align-items: center; }
.tg { background: linear-gradient(#d4d4d4, #d4d4d4) right / 2px 100% no-repeat; }
.tg.last { background: none; }
.showme { margin-left: auto; width: 200px; display: flex; align-items: center; gap: 11px; color: #000; letter-spacing: -1px; }

.workspace { flex: 1; display: flex; padding-right: 12px; }
.data { width: 400px; margin-right: 12px; background: #fff; border-right: 2px solid #d4d4d4; border-top: 2px solid #d4d4d4; color: #000; display: flex; flex-direction: column; }
.ptabs { display: flex; height: 56px; font-weight: 700; }
.ptab { flex: 1; display: flex; align-items: center; justify-content: space-between; background: #fafafa; border-left: 2px solid #d4d4d4; border-bottom: 2px solid #d4d4d4; padding: 0 14px 4px 24px; font-size: 28px; letter-spacing: .6px; }
.ptab.on { flex: none; width: 144px; background: #fff; border: 0; padding: 0 0 7px 36px; font-size: 25px; letter-spacing: 0; }
.source { height: 58px; padding-left: 43px; display: flex; align-items: center; gap: 11px; border-bottom: 2px solid #e2e2e2; color: #333; letter-spacing: -.5px; }
.dims { height: 525px; border-bottom: 2px solid #ddd; }
.phead { display: flex; align-items: center; justify-content: space-between; height: 54px; padding-left: 37px; font-weight: 700; font-size: 25px; letter-spacing: 0; }
.field { height: 42px; display: grid; grid-template-columns: 58px 1fr; column-gap: 8px; padding-left: 29px; align-items: center; white-space: nowrap; }
.field span { letter-spacing: -.9px; }
.field i { letter-spacing: -.3px; }
.meas .field span { letter-spacing: -.7px; }
.field svg { justify-self: center; position: relative; top: 1px; }
.field.calc svg { left: -4px; }
.blue svg, .abc { color: #3d86a8; }
.teal svg { color: #46a37c; }
.abc { font: 20px Inter, sans-serif; justify-self: center; }
.meas .phead { height: 49px; padding-bottom: 2px; }

.cards { width: 308px; margin-right: 12px; display: flex; flex-direction: column; }
.card { border: 2px solid #d4d4d4; background: #fafafa; padding: 12px 12px; margin-bottom: 12px; line-height: 34px; letter-spacing: -.1px; }
.pages { height: 124px; }
.filters { height: 157px; }
.marks { height: 515px; }
.select { margin-top: 24px; height: 42px; border: 2px solid #ccc; border-radius: 3px; display: flex; align-items: center; font-size: 23px; letter-spacing: -.9px; background: #fbfbfb; }
.sq { width: 20px; height: 20px; border: 2px solid #666; margin: 0 14px 0 24px; }
.select b { margin-left: auto; width: 36px; height: 38px; border-left: 2px solid #e0e0e0; display: grid; place-items: center; }
.btns { display: grid; grid-template-columns: 86px 84px 86px; column-gap: 12px; row-gap: 12px; margin-top: 12px; }
.btn { height: 84px; border: 2px solid #d4d4d4; color: #000; font-size: 22px; letter-spacing: -.4px; line-height: 26px; display: flex; flex-direction: column; align-items: center; justify-content: space-between; padding: 12px 0 3px; }
.enc { display: grid; grid-template-columns: 50px 222px; height: 46px; align-items: center; }
.enc svg { justify-self: center; margin-left: 6px; }
.btns + .enc { margin-top: 27px; }
.pill { height: 40px; line-height: 39px; border-radius: 20px; background: #00b180; color: #fff; padding-left: 21px; white-space: nowrap; letter-spacing: -.7px; }
.pill.dim { background: #4996b2; letter-spacing: -1px; }

.stage { flex: 1; display: flex; flex-direction: column; }
.shelf { height: 56px; margin-bottom: 12px; border: 2px solid #d4d4d4; background: #fafafa; display: flex; align-items: center; }
.sname { width: 217px; height: 52px; border-right: 2px solid #d4d4d4; display: flex; align-items: center; gap: 14px; padding-left: 12px; font-size: 25px; letter-spacing: -.2px; }
.shelf .pill { width: 296px; margin-left: 5px; letter-spacing: -.45px; }
.lower { flex: 1; display: flex; justify-content: space-between; }
.view { width: 1286px; height: 1179px; border: 2px solid #d4d4d4; background: #fff; padding: 0 8px; }
h1 { margin: 0; height: 84px; padding: 20px 0 0 12px; font: 300 40px/58px "Open Sans", "Noto Sans", sans-serif; letter-spacing: .6px; color: #333; }
.mapbox { position: relative; width: 1264px; height: 1082px; border: 2px solid #e3e3e3; overflow: hidden; }
.map path { vector-effect: non-scaling-stroke; }
.land { fill: #ececec; }
.water { fill: #fff; stroke: #fff; stroke-width: 1; stroke-linejoin: round; }
.lake { fill: none; stroke: #fff; stroke-width: 4; }
.coast { fill: none; stroke: #fff; stroke-width: 2; }
.park { fill: #e2e6e5; stroke: #e2e6e5; stroke-width: 1; stroke-linejoin: round; }
.cay { fill: none; stroke: #ececec; stroke-width: 2.5; }
.halo { fill: none; stroke: #fff; stroke-opacity: .45; stroke-width: 26; stroke-linejoin: round; }
.line { fill: none; stroke: #b6b6b6; stroke-width: 1.4; stroke-linejoin: round; }
.border { fill: none; stroke: #989898; stroke-width: 2; stroke-linejoin: round; }
.labels text { font-family: "Noto Sans", sans-serif; font-weight: 500; fill: #8a8a8a; stroke: #f2f2f2; stroke-width: 4; paint-order: stroke; }
.osm { font: 17px "Liberation Sans", sans-serif; fill: #777; }
.unknown { position: absolute; right: 10px; bottom: 9px; width: 162px; height: 28px; border-radius: 6px; background: linear-gradient(90deg, #bababa, #a3a3a3); color: #fff; font: 700 20.5px/26px "Noto Sans", sans-serif; letter-spacing: .3px; text-align: center; }

.legends { width: 426px; display: flex; flex-direction: column; gap: 12px; }
.legend { border: 2px solid #d4d4d4; background: #fff; }
.legend.color { height: 142px; }
.legend.size { height: 304px; }
.lh { height: 58px; background: #fafafa; padding-left: 12px; line-height: 59px; letter-spacing: -.6px; }
.ramp { margin: 7px 9px 0 7px; height: 32px; border: 2px solid #a9a292; background: linear-gradient(90deg, #ffbeb2, #fc8f78 30%, #f26250 52%, #e23c44 68%, #ad1038); }
.ends { display: flex; justify-content: space-between; padding: 5px 10px 0 8px; line-height: 30px; }
.srow { display: flex; align-items: center; height: 40px; width: 258px; justify-content: space-between; position: relative; top: 1px; }
.srow div { width: 162px; display: flex; justify-content: center; }
.srow i { display: block; height: 36px; background: #d7d7d7; border: solid #b0b0b0; border-width: 0 4px; }
.srow .dot { width: 8px; height: 8px; border-radius: 3px; background: #b0b0b0; border: 0; }

.sheets { height: 61px; flex: none; background: #e6e6e6; border-top: 2px solid #c9c9c9; border-bottom: 2px solid #d0d0d0; display: flex; color: #555; font-size: 26px; }
.st { display: flex; align-items: center; border-right: 2px solid #ccc; padding: 0 0 2px 11px; white-space: nowrap; letter-spacing: -.3px; }
.st.src { width: 262px; padding-left: 19px; gap: 11px; letter-spacing: -.7px; }
.st.on { width: 125px; background: #fafafa; font-weight: 700; color: #505050; padding-left: 12px; letter-spacing: -.1px; }
.st.s5 { width: 124px; }
.st.s6 { width: 126px; }
.st.ic { width: 64px; padding-left: 17px; }
.status { height: 40px; flex: none; background: #ebebeb; display: flex; align-items: center; font-size: 22px; color: #000; padding-left: 24px; white-space: nowrap; }
.s1 { width: 133px; letter-spacing: -.3px; }
.s2 { width: 198px; letter-spacing: -.75px; }
.s3 { letter-spacing: -.25px; }
.status svg { margin-left: auto; }

.dock {
  position: absolute; left: 0; top: 116px; width: 108px; height: 1409px; border-radius: 0 10px 10px 0; padding-top: 6px;
  background: linear-gradient(#e2e2ea, #e2e3ee 28%, #d5d8e6 42%, #a2a6b6 52%, #7f8496 58%, #82858f 68%, #a8a9b2 74%, #b2b2ba 80%, #a8a8b0);
  box-shadow: 0 0 5px rgba(0,0,0,.3), 10px 0 60px rgba(0,0,0,.14);
}
.dock svg { width: 108px; height: 90.6px; overflow: visible; }
.dock text { font-family: Inter, sans-serif; }
.petals { isolation: isolate; }
.petals rect { mix-blend-mode: multiply; }
.run { fill: #22242e; }
.run.soft { fill: #6c6d75; }
.dock hr { width: 80px; margin: 19px 0 15px 14px; border: 0; border-top: 2px solid #86868e; }
```

FILE: marks.js
```js
// Mark positions per map tile: origin, scale and [x, y, size] centres.
const tiles = [
  { x: 820, y: 380, sx: .42091, sy: .42091, pts: [[199,831],[242,1350],[323,1350],[323,1388],[290,1420],[190,1435],[218,1435],[195,1454],[318,1501],[1036,1435],[1407,1373]] },
  { x: 820, y: 900, sx: .42091, sy: .38266, pts: [[275,397],[313,465],[437,544],[765,460],[860,570],[979,371],[1074,475],[1326,826],[1306,925],[1420,690],[1420,716],[1520,690],[1544,627],[1539,491],[1492,502],[1487,528],[1496,554],[1511,549],[1520,575],[1494,585,14],[1508,597,14],[1290,295,14],[1297,324],[1316,319],[1325,329],[1283,340],[1311,345],[1306,329],[590,539]] },
  { x: 1400, y: 380, sx: .45279, sy: .42091, pts: [[190,907],[362,888],[291,950],[243,1116],[352,1131],[357,1174],[354,1197],[371,1202],[428,1245],[548,1202],[544,1302],[508,1359],[503,1373],[557,1363],[243,1387],[750,1411],[808,1468],[835,1359],[856,1330],[803,1212],[812,1221],[812,1240],[879,1226],[950,1273],[881,1304,14],[886,1312],[900,1302],[909,1321],[949,1012],[964,1012],[975,1012],[985,1041],[712,1544],[733,1544],[760,1530]] },
  { x: 1400, y: 900, sx: .45279, sy: .38266, pts: [[583,371],[595,376],[777,377],[795,391],[773,454],[650,465],[494,465],[627,695],[176,423],[207,423],[181,475],[190,502],[210,492,14],[216,518],[216,539],[190,549],[221,565],[203,585],[203,606],[322,565],[221,648],[212,663],[221,674],[229,690],[262,664],[197,703,14],[230,711,16],[247,721],[267,703,18],[280,687,14]] }
];
// Large metro squares: [left, top, width, height, fill]
const metros = [
  [964,952,154,154,'#ad1038'],[1064,1052,76,76,'#fd9a85'],[1510,832,48,48,'#ffada0'],[1538,912,38,38,'#ffada0'],
  [1660,874,44,44,'#ffada0'],[1690,900,48,48,'#ffada0'],[1674,1026,46,48,'#ffada0']
];
const cores = [
  [996,988,4,4,'#ffbeb2'],[1006,1004,4,4,'#ffbeb2'],[1098,1030,4,4,'#ffbeb2'],[1054,1084,4,4,'#ffbeb2'],
  [1010,998,62,62,'#ffa390'],[1018,1007,48,48,'#ffaa9b'],[1030,1018,28,28,'#ffb7ad'],
  [1076,1064,50,50,'#ffa898'],[1084,1076,30,30,'#ffb2a6'],[1095,1087,8,8,'#ffaca0'],
  [1522,844,22,22,'#ffb5aa'],[1547,922,18,18,'#ffb7ac'],[1670,884,24,24,'#ffb2a7'],[1702,912,24,24,'#ffb4a9'],[1685,1038,22,26,'#ffb8ad']
];
const NS = 'http://www.w3.org/2000/svg';
const layer = document.getElementById('marks');
function box(x, y, w, h, fill) {
  const r = document.createElementNS(NS, 'rect');
  r.setAttribute('x', x); r.setAttribute('y', y); r.setAttribute('width', w); r.setAttribute('height', h); r.setAttribute('fill', fill);
  layer.appendChild(r);
}
const small = tiles.flatMap(t => t.pts.map(([px, py, s = 12]) => [Math.round(t.x + px * t.sx - s / 2), Math.round(t.y + py * t.sy - s / 2), s]));
small.forEach(([x, y, s]) => box(x, y, s, s, '#e15759'));
metros.forEach(([x, y, w, h]) => box(x, y, w, h, '#e15759'));
small.forEach(([x, y, s]) => box(x + 4, y + 4, s - 8, s - 8, '#ffbeb2'));
metros.forEach(([x, y, w, h, f]) => box(x + 4, y + 4, w - 8, h - 8, f));
cores.forEach(c => box(...c));

// Faint terrain speckle under the water layers, from a fixed seed.
let seed = 17;
const rnd = () => (seed = (seed * 16807) % 2147483647) / 2147483647;
let d = '';
for (let i = 0; i < 2200; i++) {
  const x = 836 + rnd() * 1260, y = 394 + rnd() * 1078, r = 1 + rnd() * 1.8;
  d += `M${x.toFixed(1)} ${y.toFixed(1)}l${r.toFixed(1)} ${(-r).toFixed(1)} ${r.toFixed(1)} ${r.toFixed(1)} ${(-r).toFixed(1)} ${r.toFixed(1)}z`;
}
const speckle = document.createElementNS(NS, 'path');
speckle.setAttribute('d', d);
speckle.setAttribute('fill', '#e6e7e7');
document.getElementById('relief').appendChild(speckle);
```
